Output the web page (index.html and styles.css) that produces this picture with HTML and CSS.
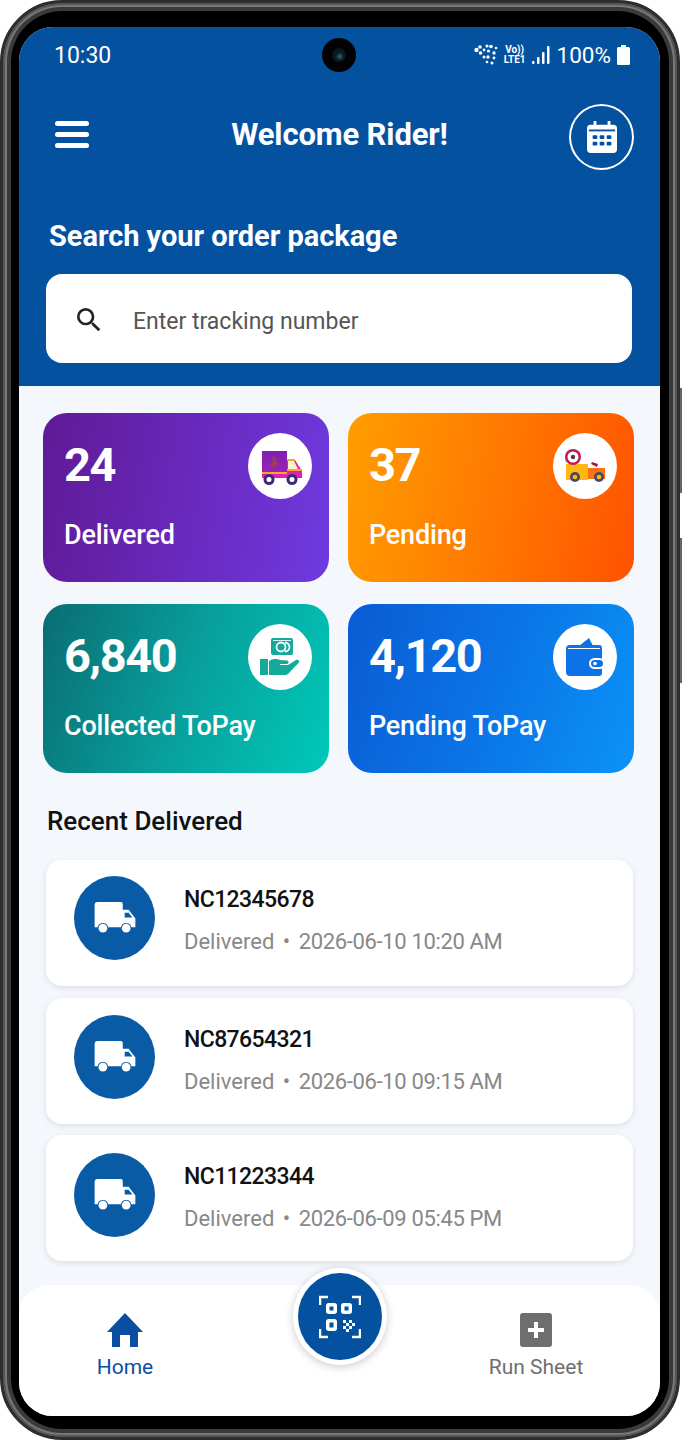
FILE: index.html
```html
<!DOCTYPE html>
<html lang="en">
<head>
    <meta charset="UTF-8">
    <meta name="viewport" content="width=device-width, initial-scale=1.0">
    <title>Rider Home</title>
    <link rel="stylesheet" href="styles.css">
</head>
<body>
<div class="phone">
    <span class="side-btn power"></span>
    <span class="side-btn volume"></span>
    <div class="screen">
        <div class="camera"><span class="lens"></span></div>

        <header class="top">
            <div class="status">
                <span class="time">10:30</span>
                <div class="status-right">
                    <svg class="net-icon" width="24" height="24" viewBox="0 0 24 24" fill="#fff">
                        <circle cx="2.500" cy="7" r="2.200"/><circle cx="6" cy="4" r="1.800"/><circle cx="6.500" cy="10" r="1.800"/><circle cx="10" cy="7" r="1.400"/>
                        <circle cx="13" cy="3" r="1.600"/><circle cx="17" cy="3.500" r="1.800"/><circle cx="22" cy="5" r="1.300"/><circle cx="14.500" cy="8" r="1.600"/>
                        <circle cx="20" cy="10" r="1.700"/><circle cx="10" cy="14" r="1.500"/><circle cx="14" cy="14" r="1.700"/><circle cx="20" cy="15" r="1.400"/>
                        <circle cx="13" cy="19" r="1.300"/><circle cx="18" cy="20" r="1.500"/>
                    </svg>
                    <div class="volte"><span>Vo))</span><span>LTE1</span></div>
                    <svg width="19" height="19" viewBox="0 0 19 19" fill="#fff">
                        <rect x="0" y="15" width="2.500" height="3" rx="1"/><rect x="5" y="11" width="2.500" height="7" rx="1"/>
                        <rect x="10" y="6" width="2.500" height="12" rx="1"/><rect x="15" y="0" width="2.500" height="18" rx="1"/>
                    </svg>
                    <span class="batt-text">100%</span>
                    <svg width="13" height="20" viewBox="0 0 13 20" fill="#fff">
                        <path d="M4 0h5v2h2.500a1.500 1.500 0 0 1 1.500 1.500V18.500a1.500 1.500 0 0 1-1.500 1.500h-10A1.500 1.500 0 0 1 0 18.500V3.500A1.500 1.500 0 0 1 1.500 2H4z"/>
                    </svg>
                </div>
            </div>

            <div class="toolbar">
                <div class="menu"><span></span><span></span><span></span></div>
                <h1>Welcome Rider!</h1>
                <div class="cal-btn">
                    <svg width="30" height="34" viewBox="0 0 32 34">
                        <path fill="#fff" d="M7 0h3v4h12V0h3v4h3a4 4 0 0 1 4 4v22a4 4 0 0 1-4 4H4a4 4 0 0 1-4-4V8a4 4 0 0 1 4-4h3z"/>
                        <rect x="2" y="9" width="28" height="2" fill="#03519f"/>
                        <g fill="#03519f">
                            <rect x="6" y="15" width="5" height="4" rx="1"/><rect x="13.500" y="15" width="5" height="4" rx="1"/><rect x="21" y="15" width="5" height="4" rx="1"/>
                            <rect x="6" y="22" width="5" height="4" rx="1"/><rect x="13.500" y="22" width="5" height="4" rx="1"/><rect x="21" y="22" width="5" height="4" rx="1"/>
                        </g>
                    </svg>
                </div>
            </div>

            <h2 class="search-title">Search your order package</h2>
            <div class="search-box">
                <svg width="32" height="32" viewBox="0 0 24 24" fill="#222">
                    <path d="M15.500 14h-.79l-.28-.27A6.470 6.470 0 0 0 16 9.500 6.500 6.500 0 1 0 9.500 16c1.610 0 3.090-.59 4.230-1.570l.27.28v.79l5 4.990L20.490 19l-4.990-5zm-6 0C7.010 14 5 11.990 5 9.500S7.010 5 9.500 5 14 7.010 14 9.500 11.990 14 9.500 14z"/>
                </svg>
                <span class="search-text">Enter tracking number</span>
            </div>
        </header>

        <main class="content">
            <div class="stats">
                <div class="stat purple">
                    <div class="stat-top">
                        <span class="num">24</span>
                        <div class="stat-icon">
                            <svg class="truck-icon" width="40" height="34" viewBox="0 0 40 34">
                                <defs>
                                    <linearGradient id="cargo" x1="0" y1="0" x2="0" y2="1">
                                        <stop offset="0" stop-color="#7a22b4"/>
                                        <stop offset="1" stop-color="#a020b0"/>
                                    </linearGradient>
                                </defs>
                                <rect x="0" y="0" width="25" height="21" fill="url(#cargo)"/>
                                <path d="M10 6c3-2 5 0 4 3l2 3-3 4c-3 1-5-1-4-3l2-3z" fill="#a9501f" opacity="0.6"/>
                                <rect x="0" y="21" width="25" height="2" fill="#f0a830"/>
                                <path d="M0 23h25V9h8l7 11v7H0z" fill="#e020b0"/>
                                <path d="M26 10h6l4 8H26z" fill="#fdf0cf"/>
                                <rect x="25" y="8" width="8" height="2" fill="#f0a830"/>
                                <rect x="25" y="18" width="15" height="2" fill="#f0a830"/>
                                <circle cx="7" cy="28.500" r="5.500" fill="#3b2a78"/><circle cx="7" cy="28.500" r="2.500" fill="#fff"/>
                                <circle cx="30" cy="28.500" r="5.500" fill="#3b2a78"/><circle cx="30" cy="28.500" r="2.500" fill="#fff"/>
                            </svg>
                        </div>
                    </div>
                    <span class="stat-label">Delivered</span>
                </div>
                <div class="stat orange">
                    <div class="stat-top">
                        <span class="num">37</span>
                        <div class="stat-icon">
                            <svg width="40" height="34" viewBox="0 0 40 34">
                                <circle cx="1" cy="11" r="2.500" fill="#bfe3ef"/>
                                <path d="M1 15h22v16H1z" fill="#fdb813"/>
                                <path d="M23 19h17v11H23z" fill="#f97316"/>
                                <path d="M27 19l2-4h5l2 4z" fill="#fff"/>
                                <path d="M27 13l6 2-1 3-6-3z" fill="#9b1c3a"/>
                                <circle cx="8" cy="8" r="8" fill="#c2185b"/><circle cx="8" cy="8" r="5.500" fill="#fff"/><circle cx="8" cy="8" r="2.200" fill="#5a3a32"/>
                                <circle cx="10" cy="28" r="5" fill="#4a4a5e"/><circle cx="10" cy="28" r="2.300" fill="#fdb813"/>
                                <circle cx="34" cy="28" r="5" fill="#4a4a5e"/><circle cx="34" cy="28" r="2.300" fill="#fdb813"/>
                            </svg>
                        </div>
                    </div>
                    <span class="stat-label">Pending</span>
                </div>
                <div class="stat teal">
                    <div class="stat-top">
                        <span class="num">6,840</span>
                        <div class="stat-icon">
                            <svg width="40" height="38" viewBox="0 0 40 38">
                                <rect x="11" y="0" width="22" height="17" rx="2" fill="#14a99a"/>
                                <rect x="13" y="2" width="18" height="1" fill="#d8f3ef"/>
                                <circle cx="21" cy="9" r="4.500" fill="none" stroke="#fff" stroke-width="1.800"/>
                                <path d="M25 4.500a4.500 4.500 0 0 1 0 9" fill="none" stroke="#fff" stroke-width="1.800"/>
                                <path d="M0 21h8v16H0z" fill="#14a99a"/>
                                <path d="M9 23c4-2.500 8-2.500 11-1l7 .5c2 .2 2 3.300 0 3.500h-7v1h8l8-5c2-1 4.500 1 2.500 3L28 36c-1 .7-2 1-3 1H9z" fill="#14a99a"/>
                            </svg>
                        </div>
                    </div>
                    <span class="stat-label">Collected ToPay</span>
                </div>
                <div class="stat blue">
                    <div class="stat-top">
                        <span class="num">4,120</span>
                        <div class="stat-icon">
                            <svg width="40" height="40" viewBox="0 0 40 40">
                                <path d="M14 9L24 1l4 8z" fill="#0d72e8"/>
                                <path d="M1 12a4 4 0 0 1 4-4h29a3 3 0 0 1 3 3v25a3 3 0 0 1-3 3H5a4 4 0 0 1-4-4z" fill="#0d72e8"/>
                                <path d="M3 11.500h32" stroke="#fff" stroke-width="1"/>
                                <rect x="25" y="22" width="14" height="9" rx="4.500" fill="#0d72e8" stroke="#fff" stroke-width="2"/>
                                <circle cx="30" cy="26.500" r="1.800" fill="#fff"/>
                            </svg>
                        </div>
                    </div>
                    <span class="stat-label">Pending ToPay</span>
                </div>
            </div>

            <h3 class="recent-title">Recent Delivered</h3>

            <div class="order first">
                <div class="order-icon">
                    <svg width="42" height="32" viewBox="0 0 42 33">
                        <path fill="#fff" d="M3 0h24a2 2 0 0 1 2 2v6h6l7 9v9h-4.100a5.500 5.500 0 0 0-10.800 0H13.900a5.500 5.500 0 0 0-10.800 0H0V3a3 3 0 0 1 3-3z"/>
                        <path fill="#0a5ba6" d="M31 11h4l4 5h-8z"/>
                        <circle cx="8.500" cy="27" r="4.500" fill="#fff"/><circle cx="32.500" cy="27" r="4.500" fill="#fff"/>
                    </svg>
                </div>
                <div class="order-text">
                    <div class="order-id">NC12345678</div>
                    <div class="order-sub">Delivered<span class="dot">•</span><span class="date">2026-06-10 10:20 AM</span></div>
                </div>
            </div>
            <div class="order">
                <div class="order-icon">
                    <svg width="42" height="32" viewBox="0 0 42 33">
                        <path fill="#fff" d="M3 0h24a2 2 0 0 1 2 2v6h6l7 9v9h-4.100a5.500 5.500 0 0 0-10.800 0H13.900a5.500 5.500 0 0 0-10.800 0H0V3a3 3 0 0 1 3-3z"/>
                        <path fill="#0a5ba6" d="M31 11h4l4 5h-8z"/>
                        <circle cx="8.500" cy="27" r="4.500" fill="#fff"/><circle cx="32.500" cy="27" r="4.500" fill="#fff"/>
                    </svg>
                </div>
                <div class="order-text">
                    <div class="order-id">NC87654321</div>
                    <div class="order-sub">Delivered<span class="dot">•</span><span class="date">2026-06-10 09:15 AM</span></div>
                </div>
            </div>
            <div class="order">
                <div class="order-icon">
                    <svg width="42" height="32" viewBox="0 0 42 33">
                        <path fill="#fff" d="M3 0h24a2 2 0 0 1 2 2v6h6l7 9v9h-4.100a5.500 5.500 0 0 0-10.800 0H13.900a5.500 5.500 0 0 0-10.800 0H0V3a3 3 0 0 1 3-3z"/>
                        <path fill="#0a5ba6" d="M31 11h4l4 5h-8z"/>
                        <circle cx="8.500" cy="27" r="4.500" fill="#fff"/><circle cx="32.500" cy="27" r="4.500" fill="#fff"/>
                    </svg>
                </div>
                <div class="order-text">
                    <div class="order-id">NC11223344</div>
                    <div class="order-sub">Delivered<span class="dot">•</span><span class="date">2026-06-09 05:45 PM</span></div>
                </div>
            </div>
        </main>

        <nav class="bottom">
            <div class="tab active">
                <svg width="36" height="34" viewBox="0 0 36 34" fill="#0a4ea2">
                    <path d="M18 0L36 19h-5v15h-8V22H13v12H5V19H0z"/>
                </svg>
                <span>Home</span>
            </div>
            <div class="tab">
                <svg width="32" height="34" viewBox="0 0 32 34">
                    <rect width="32" height="34" rx="3" fill="#6e6e6e"/>
                    <path d="M14 9h4v6h6v4h-6v6h-4v-6H8v-4h6z" fill="#fff"/>
                </svg>
                <span>Run Sheet</span>
            </div>
        </nav>

        <div class="fab">
            <svg width="42" height="44" viewBox="0 0 42 44" fill="none" stroke="#fff" stroke-width="2.500">
                <path d="M1 10V2h8M33 2h8v8M1 34v8h8M41 34v8h-8"/>
                <rect x="8.750" y="9.750" width="7.500" height="7.500" rx="1" stroke-width="3.500"/>
                <rect x="23.750" y="9.750" width="7.500" height="7.500" rx="1" stroke-width="3.500"/>
                <rect x="8.750" y="25.750" width="7.500" height="8.500" rx="1" stroke-width="3.500"/>
                <g fill="#fff" stroke="none">
                    <rect x="24" y="25" width="3" height="3"/><rect x="30" y="25" width="3" height="3"/>
                    <rect x="27" y="28" width="3" height="3"/><rect x="33" y="28" width="3" height="3"/>
                    <rect x="24" y="31" width="3" height="3"/><rect x="30" y="31" width="3" height="3"/>
                    <rect x="27" y="34" width="3" height="3"/>
                </g>
            </svg>
        </div>
    </div>
</div>
</body>
</html>
```

FILE: styles.css
```css
* {
    box-sizing: border-box;
}
body {
    margin: 0;
    background-color: #fff;
    font-family: Roboto, Arial, sans-serif;
}
.phone {
    position: relative;
    width: 680px;
    height: 1440px;
    padding: 24px 17px 21px 16px;
    background-color: #000;
    border: 3px solid #2e2e2e;
    border-radius: 62px;
    box-shadow: inset 0 0 0 2px #555, inset 0 0 0 4px #777, inset 0 0 0 8px #3a3a3a;
}
.side-btn {
    position: absolute;
    right: -5px;
    width: 2px;
    background-color: #666;
}
.power {
    top: 385px;
    height: 105px;
}
.volume {
    top: 535px;
    height: 145px;
}
.screen {
    position: relative;
    height: 100%;
    display: flex;
    flex-direction: column;
    background-color: #f4f8fd;
    border-radius: 34px;
    overflow: hidden;
}
.camera {
    position: absolute;
    top: 11px;
    left: 303px;
    width: 34px;
    height: 34px;
    border-radius: 50%;
    background-color: #020203;
    display: flex;
    align-items: center;
    justify-content: center;
}
.lens {
    width: 14px;
    height: 14px;
    border-radius: 50%;
    background: radial-gradient(circle at 55% 60%, #2a6a78 0, #0c1a20 35%, #0a1216 100%);
}

/* header */
.top {
    height: 359px;
    flex-shrink: 0;
    background-color: #03519f;
    color: #fff;
    padding: 12px 27px 0 27px;
}
.status {
    height: 32px;
    display: flex;
    align-items: center;
    justify-content: space-between;
    padding: 0 3px 0 8px;
}
.time {
    font-size: 23px;
}
.status-right {
    display: flex;
    align-items: center;
    gap: 6px;
}
.volte {
    display: flex;
    flex-direction: column;
    font-size: 10px;
    font-weight: 700;
    line-height: 10px;
    align-items: center;
}
.batt-text {
    font-size: 22.500px;
}
.toolbar {
    position: relative;
    height: 66px;
    margin-top: 33px;
    display: flex;
    align-items: center;
    justify-content: space-between;
    padding-left: 9px;
}
.toolbar h1 {
    position: absolute;
    left: 0;
    right: 0;
    margin: 0 0 6px;
    text-align: center;
    font-size: 31px;
    font-weight: 700;
    letter-spacing: -0.15px;
}
.menu {
    width: 34px;
    display: flex;
    flex-direction: column;
    gap: 6px;
    margin-bottom: 6px;
}
.menu span {
    display: block;
    height: 5px;
    background-color: #fff;
    border-radius: 3px;
}
.cal-btn {
    width: 65px;
    height: 66px;
    border: 2px solid #fff;
    border-radius: 50%;
    display: flex;
    align-items: center;
    justify-content: center;
    margin-right: -1px;
}
.search-title {
    margin: 46px 0 0 3px;
    font-size: 29px;
    font-weight: 700;
    line-height: 40px;
    letter-spacing: -0.05px;
}
.search-box {
    margin-top: 18px;
    height: 89px;
    width: 586px;
    background-color: #fff;
    border-radius: 16px;
    display: flex;
    align-items: center;
    padding: 2px 0 0 27px;
    gap: 28px;
    color: #555;
    font-size: 23px;
}
.search-text {
    padding-top: 4px;
}

/* content */
.content {
    flex: 1;
    padding: 27px 26px 0 24px;
}
.stats {
    display: grid;
    grid-template-columns: 286px 286px;
    grid-auto-rows: 169px;
    column-gap: 19px;
    row-gap: 22px;
}
.stat {
    border-radius: 24px;
    color: #fff;
    padding: 20px 17px 0 21px;
}
.purple {
    background: linear-gradient(100deg, #5f1a95 0%, #6a2cc4 60%, #6f3ae0 100%);
}
.orange {
    background: linear-gradient(100deg, #ff9d00 0%, #ff7a00 50%, #ff5200 100%);
}
.teal {
    background: linear-gradient(110deg, #0a6d72 0%, #089f9c 50%, #00c9b9 100%);
}
.blue {
    background: linear-gradient(110deg, #0a5bd3 0%, #0a74e6 50%, #0b93f7 100%);
}
.stat-top {
    display: flex;
    justify-content: space-between;
    height: 66px;
}
.num {
    font-size: 47px;
    font-weight: 700;
    line-height: 64px;
    letter-spacing: -1.4px;
}
.stat-icon {
    width: 64px;
    height: 66px;
    border-radius: 50%;
    background-color: #fff;
    display: flex;
    align-items: center;
    justify-content: center;
}
.truck-icon {
    margin: 4px 0 0 3px;
}
.stat-label {
    display: block;
    margin-top: 19px;
    font-size: 27px;
    font-weight: 500;
    line-height: 34px;
    letter-spacing: -0.2px;
}
.recent-title {
    margin: 30px 0 21px 4px;
    font-size: 26px;
    font-weight: 500;
    line-height: 36px;
    color: #111;
}
.order {
    width: 587px;
    height: 126px;
    margin: 0 0 11.500px 3px;
    padding-left: 28px;
    background-color: #fff;
    border-radius: 16px;
    box-shadow: 0 2px 6px rgba(0, 0, 0, 0.1);
    display: flex;
    align-items: center;
    gap: 29px;
}
.order-icon {
    width: 81px;
    height: 84px;
    margin-bottom: 7px;
    border-radius: 50%;
    background-color: #0a5ba6;
    display: flex;
    align-items: center;
    justify-content: center;
}
.order.first .order-icon {
    margin-bottom: 10px;
}
.order.first .order-text {
    margin-bottom: 5px;
}
.order-id {
    font-size: 23px;
    font-weight: 500;
    line-height: 30px;
    letter-spacing: -0.6px;
    color: #111;
}
.order-sub {
    margin-top: 12px;
    font-size: 22px;
    line-height: 30px;
    color: #888;
}
.dot {
    margin: 0 8.500px;
}
.date {
    letter-spacing: -0.35px;
}

/* bottom nav */
.bottom {
    height: 131px;
    flex-shrink: 0;
    background-color: #fff;
    border-radius: 30px 30px 0 0;
    display: flex;
    justify-content: space-between;
    padding: 28px 64px 0 46px;
}
.tab {
    width: 120px;
    display: flex;
    flex-direction: column;
    align-items: center;
    gap: 8px;
    font-size: 21px;
    color: #6e6e6e;
}
.tab.active {
    color: #0a4ea2;
}
.fab {
    position: absolute;
    left: 274px;
    top: 1241px;
    width: 94px;
    height: 97px;
    border-radius: 50%;
    background-color: #03519f;
    border: 5px solid #fff;
    box-shadow: 0 2px 8px rgba(0, 0, 0, 0.2);
    display: flex;
    align-items: center;
    justify-content: center;
}
```
